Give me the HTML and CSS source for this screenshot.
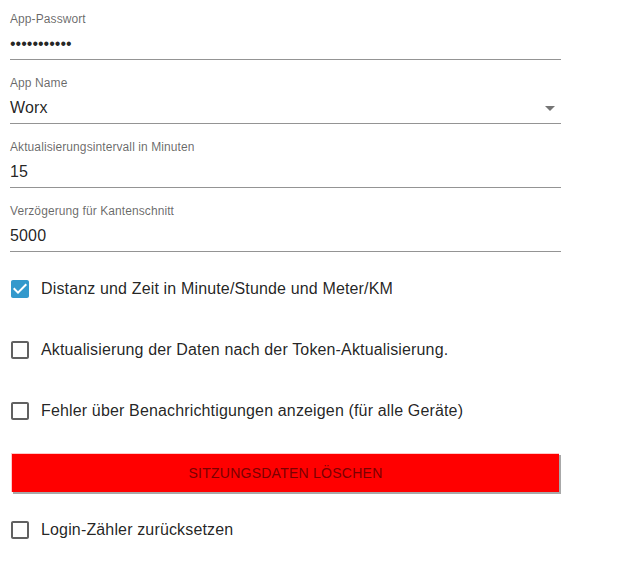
FILE: index.html
```html
<!DOCTYPE html>
<html lang="de">
<head>
<meta charset="utf-8">
<title>Worx</title>
<link rel="stylesheet" href="styles.css">
</head>
<body>
<div class="form">
  <div class="field field-first">
    <div class="label">App-Passwort</div>
    <div class="value password">•••••••••••</div>
  </div>
  <div class="field field-select">
    <div class="label">App Name</div>
    <div class="value">Worx</div>
    <svg class="arrow" viewBox="0 0 24 24" width="24" height="24"><path d="M7 10l5 5 5-5z"/></svg>
  </div>
  <div class="field">
    <div class="label">Aktualisierungsintervall in Minuten</div>
    <div class="value">15</div>
  </div>
  <div class="field">
    <div class="label">Verzögerung für Kantenschnitt</div>
    <div class="value">5000</div>
  </div>

  <div class="check-row check-row-first">
    <svg class="cb cb-on" viewBox="0 0 24 24" width="24" height="24"><path d="M19 3H5c-1.11 0-2 .9-2 2v14c0 1.1.89 2 2 2h14c1.11 0 2-.9 2-2V5c0-1.1-.89-2-2-2zm-9 14l-5-5 1.41-1.41L10 14.17l7.59-7.59L19 8l-9 9z"/></svg>
    <span class="check-label">Distanz und Zeit in Minute/Stunde und Meter/KM</span>
  </div>
  <div class="check-row">
    <svg class="cb" viewBox="0 0 24 24" width="24" height="24"><path d="M19 5v14H5V5h14m0-2H5c-1.1 0-2 .9-2 2v14c0 1.1.9 2 2 2h14c1.1 0 2-.9 2-2V5c0-1.1-.9-2-2-2z"/></svg>
    <span class="check-label">Aktualisierung der Daten nach der Token-Aktualisierung.</span>
  </div>
  <div class="check-row">
    <svg class="cb" viewBox="0 0 24 24" width="24" height="24"><path d="M19 5v14H5V5h14m0-2H5c-1.1 0-2 .9-2 2v14c0 1.1.9 2 2 2h14c1.1 0 2-.9 2-2V5c0-1.1-.9-2-2-2z"/></svg>
    <span class="check-label">Fehler über Benachrichtigungen anzeigen (für alle Geräte)</span>
  </div>

  <button class="danger-btn" type="button">Sitzungsdaten löschen</button>

  <div class="check-row check-row-last">
    <svg class="cb" viewBox="0 0 24 24" width="24" height="24"><path d="M19 5v14H5V5h14m0-2H5c-1.1 0-2 .9-2 2v14c0 1.1.9 2 2 2h14c1.1 0 2-.9 2-2V5c0-1.1-.9-2-2-2z"/></svg>
    <span class="check-label">Login-Zähler zurücksetzen</span>
  </div>
</div>
</body>
</html>
```
FILE: styles.css
```css
html, body {
  margin: 0;
  padding: 0;
  background: #ffffff;
}

body {
  font-family: "Liberation Sans", Arial, sans-serif;
  color: rgba(0, 0, 0, 0.87);
}

.form {
  width: 551px;
  padding-left: 10px;
  display: flex;
  flex-direction: column;
}

.field {
  position: relative;
  padding-top: 16px;
  padding-bottom: 5px;
  border-bottom: 1px solid rgba(0, 0, 0, 0.42);
}

.field-first {
  padding-top: 12px;
}

.label {
  font-size: 12px;
  line-height: 14px;
  letter-spacing: 0.09px;
  color: rgba(0, 0, 0, 0.6);
}

.value {
  margin-top: 8px;
  font-size: 16px;
  line-height: 20px;
  letter-spacing: 0.15px;
  color: rgba(0, 0, 0, 0.87);
}

.password {
  letter-spacing: 0;
}

.arrow {
  position: absolute;
  right: -1px;
  top: 36px;
  fill: rgba(0, 0, 0, 0.54);
}

.check-row {
  display: flex;
  align-items: center;
  height: 61px;
}

.check-row-first {
  margin-top: 6px;
}

.cb {
  flex: none;
  margin-left: -2px;
  margin-right: 9px;
  fill: rgba(0, 0, 0, 0.62);
}

.cb-on {
  fill: #3399cc;
}

.check-label {
  font-size: 16px;
  line-height: 20px;
  letter-spacing: 0.15px;
  color: rgba(0, 0, 0, 0.87);
}

.danger-btn {
  margin-top: 12px;
  margin-left: 1px;
  width: 548px;
  height: 39px;
  border: none;
  border-top: 1px solid #ffc9c9;
  border-left: 1px solid #ffc9c9;
  background: #ff0000;
  color: #7a0000;
  font-family: "Liberation Sans", Arial, sans-serif;
  font-size: 14px;
  text-transform: uppercase;
  letter-spacing: 0.25px;
  box-shadow: 2px 2px 0 #a8a8a8;
  padding: 0;
}

.check-row-last {
  margin-top: 8px;
  height: 60px;
}
```
